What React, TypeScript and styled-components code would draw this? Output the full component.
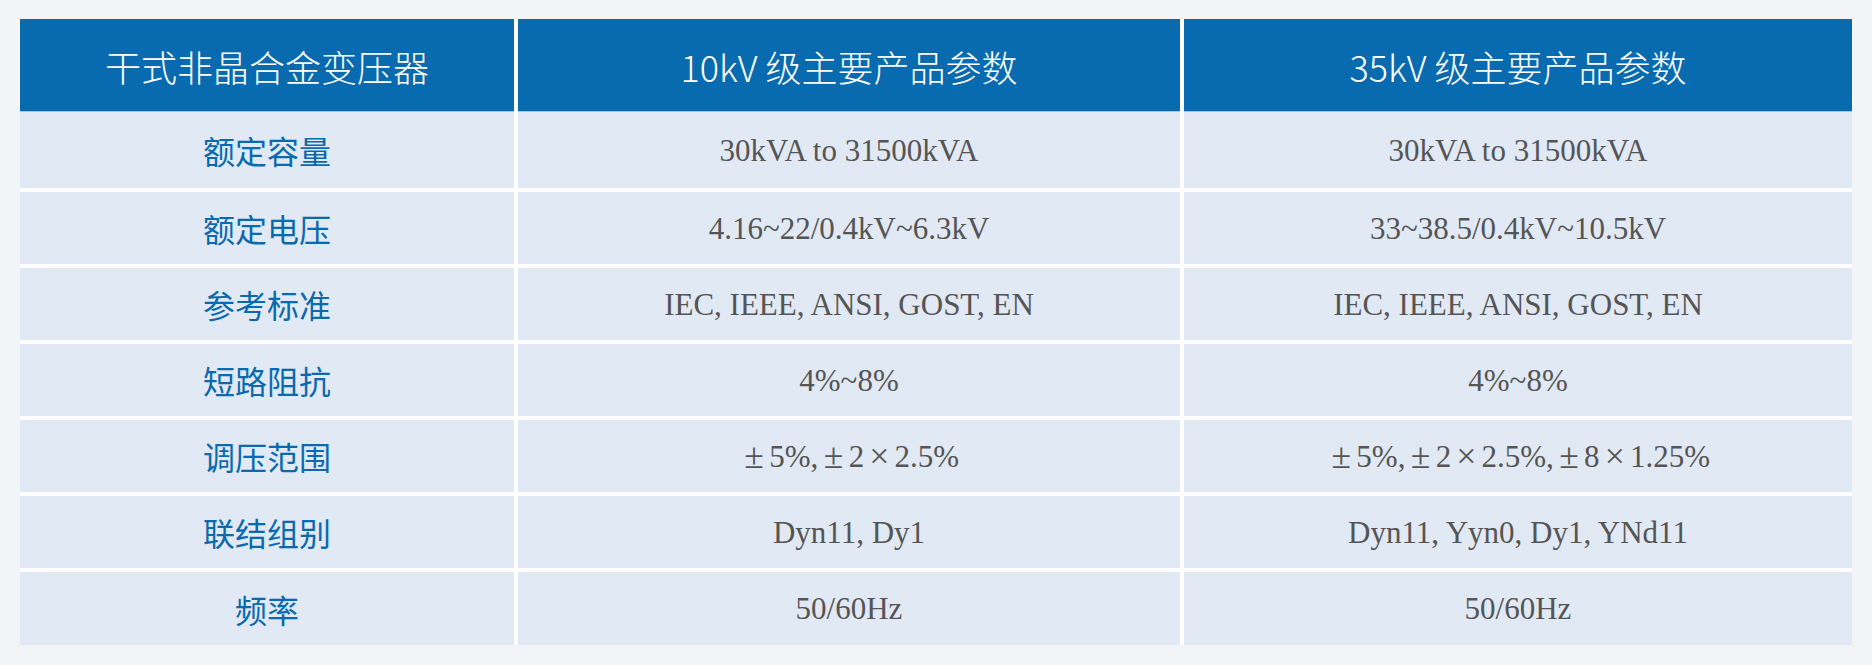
import styled, { createGlobalStyle } from "styled-components"

const GlobalStyle = createGlobalStyle`
html, body {
    margin: 0;
    padding: 0;
    background: #f3f4f8;
}
`

const Page = styled.div`
padding: 19px 20px 19px 20px;
`

const Table = styled.div`
display: flex;
flex-direction: column;
background: #ffffff;
width: 1832px;
`

const Row = styled.div<{ $h: number }>`
display: grid;
grid-template-columns: 494px 662px 1fr;
column-gap: 4px;
height: ${(p) => p.$h}px;
`

const Body = styled.div`
display: flex;
flex-direction: column;
gap: 4px;
`

const HeadCell = styled.div`
display: flex;
align-items: center;
justify-content: center;
background: #086bb0;
border-bottom: 1px solid #a7c5e2;
color: #ffffff;
font-family: "Noto Sans CJK SC", "Noto Sans", sans-serif;
font-size: 36px;
font-weight: 300;
padding-top: 2px;
`

const Cell = styled.div`
display: flex;
align-items: center;
justify-content: center;
background: #e1e9f4;
white-space: nowrap;
`

const Label = styled(Cell)`
color: #0a6ab0;
font-family: "Noto Sans CJK SC", "Noto Sans", sans-serif;
font-size: 32px;
`

const Value = styled(Cell)`
color: #555555;
font-family: "Liberation Serif", "Noto Sans CJK SC", serif;
font-size: 31px;
padding-top: 1px;
`

const Sym = styled.span`
display: inline-block;
width: 0.85em;
text-align: center;
font-size: 1.15em;
line-height: 1;
`

const withSymbols = (text: string) =>
    text.split(/([±×])/).map((part, i) =>
        part === "±" || part === "×" ? <Sym key={i}>{part}</Sym> : <span key={i}>{part}</span>
    )

const rows: [string, string, string][] = [
    ["额定容量", "30kVA to 31500kVA", "30kVA to 31500kVA"],
    ["额定电压", "4.16~22/0.4kV~6.3kV", "33~38.5/0.4kV~10.5kV"],
    ["参考标准", "IEC, IEEE, ANSI, GOST, EN", "IEC, IEEE, ANSI, GOST, EN"],
    ["短路阻抗", "4%~8%", "4%~8%"],
    ["调压范围", "±5%, ±2×2.5%", "±5%, ±2×2.5%, ±8×1.25%"],
    ["联结组别", "Dyn11, Dy1", "Dyn11, Yyn0, Dy1, YNd11"],
    ["频率", "50/60Hz", "50/60Hz"],
]

export default function App() {
    return (
        <>
            <GlobalStyle />
            <Page>
                <Table>
                    <Row $h={93}>
                        <HeadCell>干式非晶合金变压器</HeadCell>
                        <HeadCell>10kV 级主要产品参数</HeadCell>
                        <HeadCell>35kV 级主要产品参数</HeadCell>
                    </Row>
                    <Body>
                        {rows.map(([label, v10, v35], i) => (
                            <Row key={label} $h={i === 0 ? 76 : i === rows.length - 1 ? 73 : 72}>
                                <Label>{label}</Label>
                                <Value>{withSymbols(v10)}</Value>
                                <Value>{withSymbols(v35)}</Value>
                            </Row>
                        ))}
                    </Body>
                </Table>
            </Page>
        </>
    )
}
